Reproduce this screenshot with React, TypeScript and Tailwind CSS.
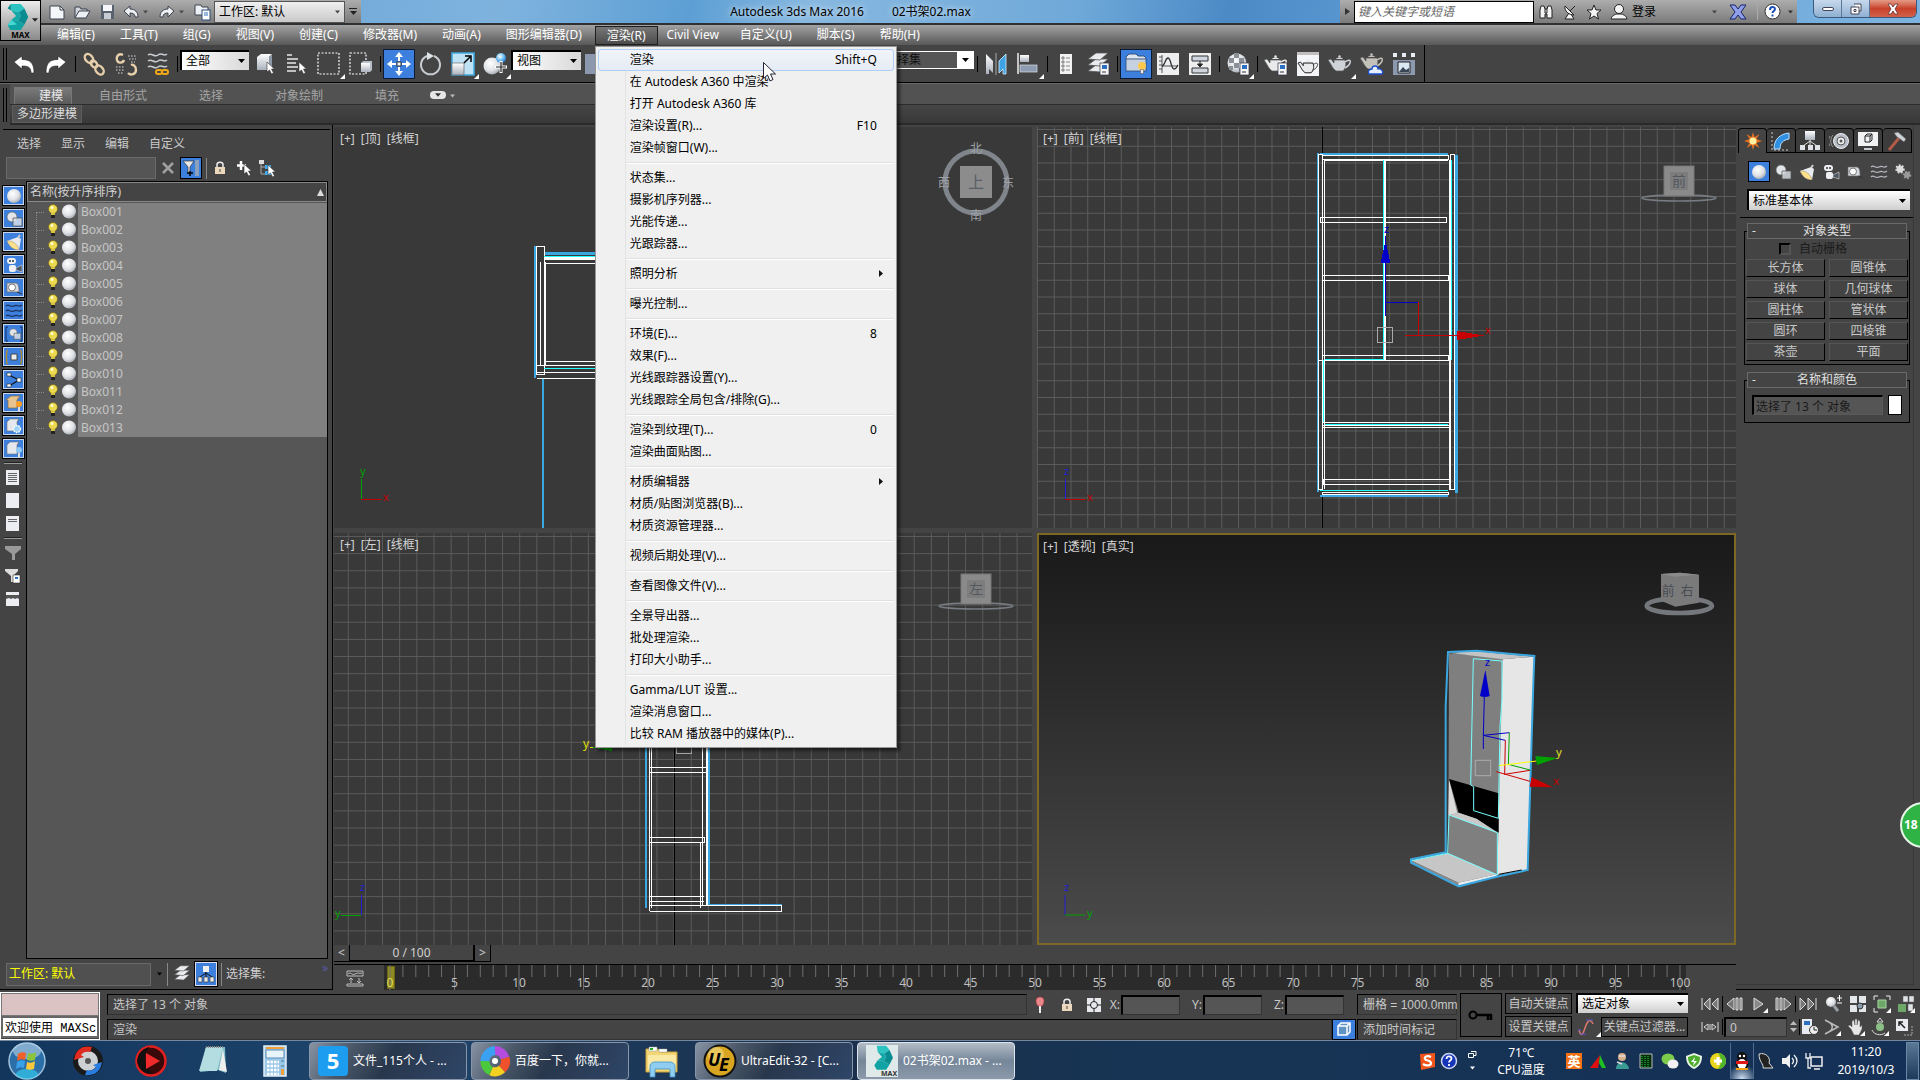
import React, { ReactNode } from "react";

/* ---------- shared primitives ---------- */

type Kids = { children?: ReactNode };

function Svg({ s = 24, h, children }: Kids & { s?: number; h?: number }) {
  return (
    <svg width={s} height={h ?? s} viewBox={`0 0 ${s} ${h ?? s}`} fill="none" className="block shrink-0" aria-hidden="true">
      {children}
    </svg>
  );
}

function Tool({ label, active, fly, children }: Kids & { label: string; active?: boolean; fly?: boolean }) {
  return (
    <button
      aria-label={label}
      className={
        active
          ? "relative flex h-[30px] w-8 shrink-0 items-center justify-center border border-[#0c1a33] bg-[#3c7fdd]"
          : "relative flex h-[30px] w-8 shrink-0 items-center justify-center"
      }
    >
      {children}
      {fly && <span className="absolute right-0 bottom-0"><Fly /></span>}
    </button>
  );
}

const Fly = () => (
  <Svg s={5}><path d="M5 0v5H0z" fill="#fff" /></Svg>
);

const Bar = () => (
  <span className="flex w-[6px] shrink-0 justify-center"><span className="h-4 w-px bg-black" /></span>
);

const Grip = ({ tall }: { tall?: boolean }) => (
  <span className={tall ? "ml-[3px] h-[34px] w-1 shrink-0 border-x border-black" : "ml-[3px] h-8 w-1 shrink-0 border-x border-black"} />
);

const Tri = ({ c = "#000", w = 7 }: { c?: string; w?: number }) => (
  <svg width={w} height={4} viewBox="0 0 7 4" className="block shrink-0" aria-hidden="true"><path d="M0 0h7L3.500 4z" fill={c} /></svg>
);

function Drop({ label, value, box, text = "text-black" }: { label: string; value: string; box: string; text?: string }) {
  return (
    <span className={"relative flex shrink-0 items-center " + box}>
      <select aria-label={label} defaultValue={value} className={"h-full w-full appearance-none bg-transparent pl-1 text-[12px] leading-4 outline-none " + text}>
        <option>{value}</option>
      </select>
      <span className="pointer-events-none absolute right-1"><Tri /></span>
    </span>
  );
}

/* ---------- icons ---------- */

const Defs = () => (
  <svg width="0" height="0" className="absolute" aria-hidden="true">
    <defs>
      <radialGradient id="ball" cx=".4" cy=".35" r=".7"><stop offset="0" stopColor="#fff" /><stop offset=".6" stopColor="#dfe1e5" /><stop offset="1" stopColor="#a2a7ae" /></radialGradient>
      <radialGradient id="blueball" cx=".4" cy=".35" r=".7"><stop offset="0" stopColor="#fff" /><stop offset=".6" stopColor="#5fb4ee" /><stop offset="1" stopColor="#1f6fc0" /></radialGradient>
      <linearGradient id="steel" x1="0" y1="0" x2="0" y2="1"><stop offset="0" stopColor="#fff" /><stop offset="1" stopColor="#aab1bd" /></linearGradient>
    </defs>
  </svg>
);

const UndoI = ({ flip }: { flip?: boolean }) => (
  <Svg s={22}><g transform={flip ? "translate(22 0) scale(-1 1)" : undefined}><path d="M1 9l8-6v3.500c8 0 12 3 12 13.500h-3c0-6-3-7-9-7v3z" fill="#fff" stroke="#222" strokeWidth=".6" /></g></Svg>
);
const SmallUndo = ({ flip }: { flip?: boolean }) => (
  <Svg s={16}><g transform={flip ? "translate(16 0) scale(-1 1)" : undefined}><path d="M1 7l6-5v3c5 0 8 3 8 8h-3c0-3-2-4-5-4v4z" fill="#eef0f2" stroke="#3a424e" /></g></Svg>
);
const ChainI = () => (
  <Svg s={24}><g stroke="#e6cfaa" strokeWidth="2.400"><ellipse cx="7" cy="6.500" rx="5" ry="3.600" transform="rotate(50 7 6.500)" /><ellipse cx="12" cy="12" rx="4" ry="2.600" transform="rotate(50 12 12)" /><ellipse cx="17.500" cy="18" rx="5" ry="3.600" transform="rotate(50 17.500 18)" /></g></Svg>
);
const UnlinkI = () => (
  <Svg s={24}><g stroke="#e6cfaa" strokeWidth="2.400"><path d="M10 8C9 11 4 12 3 8S5 1 9 3M14 21c3 3 8 1 8-3s-3-6-5-5" /></g><g stroke="#ddd" strokeDasharray="1.500 1.500"><path d="M14 4h8M15 7h7M17 10h4M2 15h8M2 18h8M4 21h6" /></g></Svg>
);
const BindI = () => (
  <Svg s={24}><g stroke="#c9cdd2" strokeWidth="1.500"><path d="M2 3c4-3 6 3 10 0s6 2 9-1M2 9c4-3 6 3 10 0s6 2 9-1M2 15c4-3 6 3 10 0s6 2 9-1" /></g><g stroke="#f0a818" strokeWidth="2"><rect x="10" y="18" width="6" height="4" rx="2" /><rect x="16" y="18" width="6" height="4" rx="2" /></g></Svg>
);
const Arrow = ({ x, y }: { x: number; y: number }) => (
  <path transform={`translate(${x} ${y})`} d="M0 0v10l2.500-2 2 4 2-1-2-4h3z" fill="#fff" stroke="#333" strokeWidth=".6" />
);
const CubeArrowI = () => (
  <Svg s={24}><path d="M4 5l4-3h11l-3 3zM4 5h12v13H4z" fill="url(#steel)" /><path d="M16 5l3-3v12l-3 4z" fill="#8e97a5" /><Arrow x={14} y={10} /></Svg>
);
const ListArrowI = () => (
  <Svg s={24}><g stroke="#e8e8e8" strokeWidth="1.400"><path d="M2 3h5M2 7h11M2 11h9M2 15h11M2 19h9" /></g><Arrow x={14} y={10} /></Svg>
);
const DashI = ({ cube }: { cube?: boolean }) => (
  <Svg s={24}><rect x="1" y="1" width={cube ? 16 : 21} height="21" stroke="#fff" strokeDasharray="2 1.500" strokeWidth="1.200" />{cube && <><path d="M12 11h9v9h-9z" fill="url(#steel)" /><path d="M12 11l2-2h9l-2 2zM21 11l2-2v9l-2 2z" fill="#b9bfca" /></>}</Svg>
);
const MoveI = () => (
  <Svg s={24}><path d="M12 0l4 5h-3v4h-2V5H8zM12 24l4-5h-3v-4h-2v4H8zM0 12l5-4v3h4v2H5v3zM24 12l-5-4v3h-4v2h4v3z" fill="#fff" /><rect x="10" y="10" width="4" height="4" stroke="#333" fill="#fff" /></Svg>
);
const RotateI = () => (
  <Svg s={24}><path d="M15 4a9.500 9.500 0 1 1-7 0" stroke="#c9cdd2" strokeWidth="2" /><path d="M8 0l7 4-7 4z" fill="#dfe3e8" /></Svg>
);
const ScaleI = () => (
  <Svg s={24}><path d="M1 1h22v22H1z" fill="#bfe3f5" stroke="#3fa9df" strokeWidth="1.500" /><path d="M1 11h12v12H1z" fill="url(#steel)" stroke="#555" strokeWidth=".6" /><path d="M13 11l6-6M14 4h6v6" stroke="#000" strokeWidth="1.500" /></Svg>
);
const PlaceI = () => (
  <Svg s={24}><circle cx="9" cy="14" r="8.500" fill="url(#ball)" /><circle cx="18" cy="6" r="5" fill="url(#blueball)" /><path d="M18 9v12M12 15h12" stroke="#fff" strokeWidth="3" /><path d="M18 10v10M13 15h10" stroke="#222" strokeWidth="1.200" /></Svg>
);
const MirrorI = () => (
  <Svg s={24}><path d="M2 2l7 7v12l-4-4v5H2z" fill="url(#steel)" /><path d="M22 2l-7 7v12l4-4v5h3z" fill="#3fa2e4" stroke="#d7effc" strokeWidth=".8" /><path d="M12 1v22" stroke="#aaa" /></Svg>
);
const AlignI = () => (
  <Svg s={24}><path d="M2 1v21" stroke="#eee" strokeWidth="1.500" /><rect x="4" y="3" width="9" height="7" fill="url(#steel)" /><rect x="4" y="13" width="17" height="7" fill="#8e9bb0" stroke="#d8dee8" strokeWidth=".7" /></Svg>
);
const SheetI = () => (
  <Svg s={24}><path d="M6 2h12v20H6z" fill="#f2f2f2" /><path d="M8 5h2v2H8zM8 9h2v2H8zM8 13h2v2H8zM8 17h2v2H8z" stroke="#555" strokeWidth=".7" /><path d="M12 6h4M12 10h4M12 14h4M12 18h4" stroke="#888" /></Svg>
);
const Badge = () => (
  <g><rect x="14" y="11" width="9" height="12" fill="#f4f6f8" stroke="#334" strokeWidth=".7" /><rect x="16" y="13" width="5" height="4" fill="#2b6fc0" /><path d="M16 20h4" stroke="#333" /></g>
);
const LayersI = ({ badge, s = 24 }: { badge?: boolean; s?: number }) => (
  <svg width={s} height={s} viewBox="0 0 24 24" fill="none" className="block" aria-hidden="true"><g fill="#e9ebee" stroke="#555" strokeWidth=".8"><path d="M2 19l8-6h12l-8 7z" /><path d="M2 13l8-6h12l-8 7z" /><path d="M2 7l8-6h12l-8 7z" /></g>{badge && <Badge />}</svg>
);
const RibbonI = () => (
  <Svg s={24}><path d="M2 5l3-3h7l2 2h6l2 2v13H2z" fill="#dfe5ee" stroke="#33507c" /><path d="M2 7h20" stroke="#33507c" /><path d="M3 8h18v10H3z" fill="#c6d1e2" /><circle cx="18" cy="14" r="4" fill="#ffc94d" /><path d="M16.500 17.500h3v4h-3z" fill="#e9e9e9" stroke="#555" strokeWidth=".5" /></Svg>
);
const CurveI = () => (
  <Svg s={24}><path d="M1 1h22v22H1z" fill="#eceef0" /><path d="M6 3v18M3 5h3M3 9h3M3 13h3M3 17h3M6 14h16" stroke="#555" /><path d="M6 14c3 0 3-8 6-8s3 11 6 11 3-3 4-4" stroke="#333" strokeWidth="1.300" /></Svg>
);
const SchematicI = () => (
  <Svg s={24}><path d="M1 1h22v22H1z" fill="#eceef0" /><path d="M4 4h16v5H4zM4 16h16v5H4z" fill="#cfd5de" stroke="#333" /><path d="M12 9v5M9.500 12l2.500 3 2.500-3z" fill="#222" stroke="#222" /></Svg>
);
const MaterialI = () => (
  <Svg s={24}><circle cx="11" cy="11" r="9.500" fill="url(#ball)" /><path d="M3 6h5v5H3zM8 1h5v5H8zM13 6h5v5h-5zM8 11h5v5H8zM3 14h4v4H3zM13 16h3v4h-3z" fill="#8a9098" /><Badge /></Svg>
);
const Pot = ({ c = "#e8eaec", x = 0, y = 0 }: { c?: string; x?: number; y?: number }) => (
  <g transform={`translate(${x} ${y})`}><path d="M6 8h11c2 5 0 9-2 11H8C5 17 4 14 2 11L0 8l3-1 3 4z" fill={c} stroke="#555" strokeWidth=".7" /><path d="M17 10c4-3 6-2 5 1s-3 4-5 5" stroke={c} strokeWidth="1.500" /><path d="M8 7c1-2 6-2 7 0z" fill={c} /><circle cx="11.500" cy="4.500" r="1.200" fill={c} /></g>
);
const PotFrameI = () => (
  <Svg s={24}><path d="M1 0h22v24H1z" fill="#f3f5f8" /><path d="M1 0h22v3H1z" fill="#c4bfbf" /><g transform="translate(2 4) scale(.88)"><Pot c="#e8eaec" /><path d="M17 10c4-3 6-2 5 1s-3 4-5 5M6 8h11c2 5 0 9-2 11H8C5 17 4 14 2 11L0 8l3-1 3 4z" stroke="#333" /></g></Svg>
);
const GalleryI = () => (
  <Svg s={24}><path d="M1 1h4v4H1zM10 1h4v4h-4zM19 1h4v4h-4z" fill="#e8edf3" /><path d="M1 8h22v15H1z" fill="#8b98ad" /><path d="M6 10h12v11H6z" fill="#dbe7f3" stroke="#222" /><path d="M7 20l4-5 3 3 3-2v4z" fill="#3a4655" /></Svg>
);
const MaxLogo = ({ s = 30 }: { s?: number }) => (
  <svg width={s} height={s} viewBox="0 0 30 30" className="block" aria-hidden="true">
    <path d="M8 1h11l4 5-6 4-8-2z" fill="#2cc4c0" /><path d="M17 10l6-4 4 9-4 8-7-4 3-5z" fill="#0a8d90" /><path d="M8 1l-3 5 4 2z" fill="#0a8d90" /><path d="M9 8l8 2 2 4-3 5-7-1 5-4z" fill="#14a9a8" /><path d="M9 18l7 1 7 4-4 6H8l-3-5z" fill="#0fa3a3" /><path d="M9 18l-4 6 10-1z" fill="#45d7d2" />
  </svg>
);

/* ---------- header ---------- */

function TitleBar() {
  return (
    <div className="flex h-[25px] shrink-0 border-b-2 border-[#2e3033] bg-[linear-gradient(100deg,#5b9bd0_0%,#7fb3de_26%,#5d9fd4_36%,#87b8e0_42%,#6fa9d9_56%,#4c8ac6_64%,#5f9fd6_75%,#7db3e0_100%)]">
      <div className="flex w-[361px] shrink-0 items-center bg-gradient-to-b from-[#adadad] to-[#7b7b7b] pl-[48px]">
        <button aria-label="新建" className="w-[25px]"><Svg s={18}><path d="M2 3h10l4 4v9H2z" fill="#f4f6f9" stroke="#3d434e" /><path d="M12 3v4h4" stroke="#3d434e" /></Svg></button>
        <button aria-label="打开" className="w-[25px]"><Svg s={18}><path d="M2 15V4h5l1 2h6v2" fill="#cfd3da" stroke="#3d434e" /><path d="M2 15l4-7h11l-4 7z" fill="#eef1f4" stroke="#3d434e" /></Svg></button>
        <button aria-label="保存" className="w-[25px]"><Svg s={18}><path d="M3 2h13v14H3z" fill="#59606e" /><path d="M5 2h9v6H5z" fill="#f4f6f9" /><path d="M6 10h7v6H6z" fill="#c7ccd4" /></Svg></button>
        <button aria-label="撤消" className="w-5"><SmallUndo /></button>
        <span className="w-4"><Tri c="#4a4a4a" w={5} /></span>
        <button aria-label="重做" className="w-5"><SmallUndo flip /></button>
        <span className="w-3"><Tri c="#4a4a4a" w={5} /></span>
        <button aria-label="项目文件夹" className="mr-[2px] ml-[3px] w-[18px]"><Svg s={18}><path d="M1 2h6l1 2h6v8H1z" fill="#eef1f4" stroke="#3d434e" /><rect x="8" y="7" width="8" height="10" fill="#fff" stroke="#2d4d7d" /><path d="M10 10h4M10 12h4" stroke="#2b6fc0" /></Svg></button>
        <span className="relative flex h-[22px] w-[131px] items-center border border-[#555] bg-gradient-to-b from-[#f0f0f0] to-[#c9c9c9]">
          <select aria-label="工作区" className="h-full w-full appearance-none bg-transparent pl-1 text-[12px] text-black"><option>工作区: 默认</option></select>
          <span className="pointer-events-none absolute right-1"><Tri c="#444" w={5} /></span>
        </span>
        <button aria-label="自定义快速访问" className="flex h-full w-4 flex-col items-center justify-center gap-[2px]"><span className="h-px w-2 bg-[#222]" /><Tri c="#222" /></button>
      </div>
      <h1 className="flex flex-1 items-center justify-center gap-7 text-[12px] text-black [text-shadow:0_0_6px_#fff]">
        <span>Autodesk 3ds Max 2016</span><span>02书架02.max</span>
      </h1>
      <div className="flex w-[457px] shrink-0 items-center bg-gradient-to-b from-[#adadad] to-[#7b7b7b] text-[#2c3440]">
        <span className="flex w-[14px] justify-center"><Svg s={7}><path d="M1 0l5 3.500-5 3.500z" fill="#333" /></Svg></span>
        <input aria-label="搜索" placeholder="键入关键字或短语" className="h-[22px] w-[180px] border border-black bg-white pl-[3px] text-[12px] italic placeholder:text-[#666]" />
        <button aria-label="查找" className="ml-1 w-6"><Svg s={16}><path d="M2 6l1-4h3l1 3h2l1-3h3l1 4v8H9v-4H7v4H2z" fill="#f4f4f4" stroke="#222" /><path d="M7 5v4h2V5" stroke="#222" /></Svg></button>
        <button aria-label="通信中心" className="w-6"><Svg s={16}><path d="M3 2c-1 5 4 9 9 9zM7 9l-4 6h9l-3-5M8 7l5-5" fill="#f4f4f4" stroke="#222" /></Svg></button>
        <button aria-label="收藏夹" className="w-6"><Svg s={16}><path d="M8 1l2 5h5l-4 3.500 1.500 5.500L8 12l-4.500 3L5 9.500 1 6h5z" fill="#f4f4f4" stroke="#222" /></Svg></button>
        <button className="flex items-center gap-1 text-[12px] text-black"><Svg s={18}><circle cx="9" cy="6" r="4.500" fill="#f4f4f4" stroke="#222" /><path d="M1 16c1-4 4-4 5-5h6c1 1 4 1 5 5z" fill="#f4f4f4" stroke="#222" /></Svg>登录</button>
        <span className="ml-auto"><Tri c="#444" w={5} /></span>
        <button aria-label="Exchange" className="mr-1 ml-3 w-[18px]"><Svg s={18}><path d="M1 2h5l3 4 3-4h5l-5 7 5 7h-5l-3-4-3 4H1l5-7z" fill="#8f9fe8" stroke="#18256e" /></Svg></button>
        <span className="mx-[6px] h-4 w-px bg-[#aaa]" />
        <button aria-label="帮助" className="mr-2 w-4"><Svg s={17}><circle cx="8.500" cy="8.500" r="7.500" fill="#fff" stroke="#333" /><path d="M6 7c0-4 5-3.500 5-1 0 2-2.500 2-2.500 4M8.500 11.500v2" stroke="#1d4fb8" strokeWidth="2" /></Svg></button>
        <span className="mr-1"><Tri c="#333" w={5} /></span>
      </div>
      <div className="ml-4 flex h-[18px] w-[104px] shrink-0 overflow-hidden rounded-b-md border border-t-0 border-[#3d5a7c]">
        <button aria-label="最小化" className="flex w-7 items-center justify-center border-r border-[#5b7797] bg-gradient-to-b from-[#c7d9ec] to-[#8fb0d2]"><span className="h-[4px] w-3 rounded-sm border border-[#445] bg-white" /></button>
        <button aria-label="还原" className="flex w-7 items-center justify-center border-r border-[#5b7797] bg-gradient-to-b from-[#c7d9ec] to-[#8fb0d2]"><Svg s={12}><path d="M4 1h7v7H9M1 4h8v7H1zM4 6.500h2v2H4z" stroke="#445" fill="#fff" /></Svg></button>
        <button aria-label="关闭" className="flex flex-1 items-center justify-center bg-gradient-to-b from-[#e39a86] via-[#c9412a] to-[#d2604a]"><Svg s={12}><path d="M1 1h3l2 3 2-3h3L8 6l3 5H8L6 8l-2 3H1l3-5z" fill="#fff" stroke="#633" strokeWidth=".8" /></Svg></button>
      </div>
      <span className="w-[3px] shrink-0" />
    </div>
  );
}

type Entry = { t: string; k?: string; sub?: boolean };
const RENDER_MENU: Entry[][] = [
  [{ t: "渲染", k: "Shift+Q" }, { t: "在 Autodesk A360 中渲染" }, { t: "打开 Autodesk A360 库" }, { t: "渲染设置(R)...", k: "F10" }, { t: "渲染帧窗口(W)..." }],
  [{ t: "状态集..." }, { t: "摄影机序列器..." }, { t: "光能传递..." }, { t: "光跟踪器..." }],
  [{ t: "照明分析", sub: true }],
  [{ t: "曝光控制..." }],
  [{ t: "环境(E)...", k: "8" }, { t: "效果(F)..." }, { t: "光线跟踪器设置(Y)..." }, { t: "光线跟踪全局包含/排除(G)..." }],
  [{ t: "渲染到纹理(T)...", k: "0" }, { t: "渲染曲面贴图..." }],
  [{ t: "材质编辑器", sub: true }, { t: "材质/贴图浏览器(B)..." }, { t: "材质资源管理器..." }],
  [{ t: "视频后期处理(V)..." }],
  [{ t: "查看图像文件(V)..." }],
  [{ t: "全景导出器..." }, { t: "批处理渲染..." }, { t: "打印大小助手..." }],
  [{ t: "Gamma/LUT 设置..." }, { t: "渲染消息窗口..." }, { t: "比较 RAM 播放器中的媒体(P)..." }],
];

function RenderMenu() {
  return (
    <div role="menu" className="absolute top-[20px] left-0 z-40 w-[302px] border border-[#979797] bg-[#f0f0f0] p-[2px] text-black shadow-[3px_3px_3px_rgba(0,0,0,0.5)]">
      <span className="absolute inset-y-[2px] left-[29px] w-px bg-[#e2e3e3]" />
      {RENDER_MENU.map((group, g) => (
        <div key={g} className={g ? "relative" : ""}>
          {g > 0 && <div className="my-[3px] ml-7 h-[2px] border-b border-white bg-[#e0e0e0]" />}
          {group.map((e, i) => (
            <button
              key={e.t}
              role="menuitem"
              className={
                g === 0 && i === 0
                  ? "relative flex h-[22px] w-full items-center rounded-[3px] border border-[#aecff7] bg-gradient-to-b from-[#f1f4f9] to-[#e6ecf5] pr-4 pl-[31px] text-left text-[12px]"
                  : "relative flex h-[22px] w-full items-center border border-transparent pr-4 pl-[31px] text-left text-[12px]"
              }
            >
              <span className="flex-1 whitespace-nowrap">{e.t}</span>
              {e.k && <span>{e.k}</span>}
              {e.sub && <span className="-mr-2"><Svg s={7}><path d="M1 0l4 3.500-4 3.500z" fill="#111" /></Svg></span>}
            </button>
          ))}
        </div>
      ))}
    </div>
  );
}

const MENUS = ["编辑(E)", "工具(T)", "组(G)", "视图(V)", "创建(C)", "修改器(M)", "动画(A)", "图形编辑器(D)", "渲染(R)", "Civil View", "自定义(U)", "脚本(S)", "帮助(H)"];

function MenuBar() {
  return (
    <nav className="flex h-[20px] shrink-0 items-center gap-px bg-gradient-to-b from-[#a3a3a3] via-[#7d7d7d] to-[#585858] pl-[45px] text-[12px] text-white">
      {MENUS.map((m) =>
        m === "渲染(R)" ? (
          <div key={m} className="relative">
            <button className="h-[19px] border border-[#1e1e1e] bg-gradient-to-b from-[#777] to-[#4c4c4c] px-[11px]">{m}</button>
            <RenderMenu />
          </div>
        ) : (
          <button key={m} className={m === "Civil View" ? "px-2" : "px-3"}>{m}</button>
        ),
      )}
    </nav>
  );
}

function MainToolbar() {
  return (
    <div className="flex h-[38px] shrink-0 border-b border-black bg-[#444]">
      <div className="flex items-center border-r border-black pr-1">
        <Grip /><span className="w-px" />
        <Tool label="撤消"><UndoI /></Tool>
        <Tool label="重做"><UndoI flip /></Tool>
        <Bar />
        <Tool label="选择并链接"><ChainI /></Tool>
        <Tool label="取消链接选择"><UnlinkI /></Tool>
        <Tool label="绑定到空间扭曲"><BindI /></Tool>
        <Bar />
        <Drop label="选择过滤器" value="全部" box="-mt-2 h-5 w-[69px] border-t-2 border-l-2 border-black bg-gradient-to-r from-white to-[#d8d8d8]" />
        <Tool label="选择对象"><CubeArrowI /></Tool>
        <Tool label="按名称选择"><ListArrowI /></Tool>
        <Tool label="矩形选择区域" fly><DashI /></Tool>
        <Tool label="窗口/交叉"><DashI cube /></Tool>
        <Bar />
        <Tool label="选择并移动" active><MoveI /></Tool>
        <Tool label="选择并旋转"><RotateI /></Tool>
        <Tool label="选择并均匀缩放" fly><ScaleI /></Tool>
        <Tool label="选择并放置" fly><PlaceI /></Tool>
        <Drop label="参考坐标系" value="视图" box="-mt-2 h-5 w-[70px] border-t-2 border-l-2 border-black bg-gradient-to-r from-white to-[#d8d8d8]" />
        <Tool label="使用轴点中心"><Svg s={24}><path d="M0 2h14v20H0z" fill="#8b98ad" /></Svg></Tool>
        <span className="w-[235px]" />
        <span className="relative -mt-2 flex h-[18px] w-[126px] items-center border border-white bg-[#555]">
          <select aria-label="创建选择集" className="h-full w-full appearance-none bg-transparent pl-3 text-[12px] leading-4 text-[#111]"><option>创建选择集</option></select>
          <span className="pointer-events-none absolute top-0 right-0 flex h-full w-4 items-center justify-center bg-white"><Tri /></span>
        </span>
        <Bar />
        <Tool label="镜像"><MirrorI /></Tool>
        <Tool label="对齐" fly><AlignI /></Tool>
        <Bar />
        <Tool label="场景资源管理器"><SheetI /></Tool>
        <Tool label="层资源管理器"><LayersI badge /></Tool>
        <Bar />
        <Tool label="切换功能区" active><RibbonI /></Tool>
        <Tool label="曲线编辑器"><CurveI /></Tool>
        <Tool label="图解视图"><SchematicI /></Tool>
        <Bar />
        <Tool label="材质编辑器" fly><MaterialI /></Tool>
        <Bar />
        <Tool label="渲染设置"><Svg s={24}><Pot /><Badge /></Svg></Tool>
        <Tool label="渲染帧窗口"><PotFrameI /></Tool>
        <Tool label="渲染产品" fly><Svg s={24}><Pot c="#cfd2d6" /></Svg></Tool>
        <Tool label="在云中渲染"><Svg s={24}><Pot c="#c4c1bb" y={-2} /><path d="M9 22c-2-4 2-5 3-5 0-4 6-4 6 0 3-1 6 3 4 5z" fill="#e6f0ff" stroke="#1c4fd0" strokeWidth="1.300" /></Svg></Tool>
        <Tool label="A360 库"><GalleryI /></Tool>
      </div>
    </div>
  );
}

function Ribbon() {
  return (
    <div className="flex h-[42px] shrink-0 border-t border-[#6a6a6a] bg-[#4f4f4f]">
      <div className="flex w-[10px] shrink-0 items-center bg-[#444]"><Grip tall /></div>
      <div className="flex flex-1 flex-col">
        <div className="flex h-[20px] items-end bg-[#525252] pl-1 text-[12px] text-[#a5a5a5]">
          <button className="h-[17px] w-[58px] border border-b-0 border-[#777] bg-gradient-to-b from-[#7a7a7a] to-[#5a5a5a] pl-4 leading-4 text-[#e6e6e6]">建模</button>
          <button className="ml-[27px] leading-[17px]">自由形式</button>
          <button className="ml-[52px] leading-[17px]">选择</button>
          <button className="ml-[52px] leading-[17px]">对象绘制</button>
          <button className="ml-[52px] leading-[17px]">填充</button>
          <button aria-label="最小化功能区" className="mb-[5px] ml-[31px] flex h-2 w-4 items-center justify-center rounded-sm bg-[#e6e6e6]"><Tri c="#333" w={6} /></button>
          <span className="mb-[6px] ml-1"><Tri c="#bbb" w={5} /></span>
        </div>
        <div className="flex h-[19px] items-center border-t border-[#2c2c2c] bg-gradient-to-b from-[#464646] to-[#383838] pl-[2px]">
          <button className="h-[18px] w-[70px] border border-[#5c5c5c] bg-[#505050] text-[12px] leading-4 whitespace-nowrap text-[#dcdcdc]">多边形建模</button>
        </div>
        <div className="h-[2px] border-y border-[#2a2a2a] bg-[#444]" />
      </div>
    </div>
  );
}

/* ---------- scene explorer ---------- */

const Sphere = () => <circle cx="9" cy="8" r="7" fill="url(#ball)" />;
const Shapes = () => (<><circle cx="7" cy="6" r="5" fill="#e2e5ea" stroke="#666" strokeWidth=".7" /><path d="M8 7h9v8H8z" fill="#dfe3e9" fillOpacity=".8" stroke="#555" strokeWidth=".8" /></>);
const Lamp = () => (<><path d="M2 7L13 3l3 2-2 11z" fill="#e9ebee" /><path d="M2 7c2 5 6 9 12 9-1-5-6-10-12-9z" fill="#ffe08a" stroke="#888" strokeWidth=".5" /><path d="M13 4l2-3" stroke="#ccc" strokeWidth="2" /></>);
const Cam = () => (<><rect x="2" y="1" width="9" height="6" rx="3" fill="#eef0f3" /><circle cx="5" cy="4" r="1" fill="#333" /><circle cx="8" cy="4" r="1" fill="#333" /><rect x="4" y="8" width="7" height="7" rx="2" fill="#eef0f3" /><path d="M11 11l6-3v7l-6-2z" fill="#4b5560" stroke="#ddd" strokeWidth=".6" /></>);
const Tape = () => (<><path d="M2 3h9c3 1 3 5 3 9H2z" fill="#d7dbe1" stroke="#666" strokeWidth=".7" /><circle cx="7" cy="7.500" r="3.500" fill="#fff" stroke="#777" /><path d="M12 12l5 2" stroke="#333" /></>);
const CubeS = () => (<path d="M2 4l3-3h9l-2 3v9H2zM12 4l2-3" fill="#e4e7ec" stroke="#777" strokeWidth=".6" />);

const FILTERS: ReactNode[] = [
  <Sphere />, <Shapes />, <Lamp />, <Cam />, <Tape />,
  <path d="M1 3c3-3 4 2 8 0s4 2 8-1M1 8c3-3 4 2 8 0s4 2 8-1M1 13c3-3 4 2 8 0s4 2 8-1" stroke="#1b2f55" strokeWidth="1.200" />,
  <><path d="M3 1H1v14h2M15 1h2v14h-2" stroke="#0d2d66" /><g transform="translate(3 2) scale(.75)"><Shapes /></g></>,
  <><path d="M3 1c-3 1 0 5-2 7 2 2-1 6 2 7M15 1c3 1 0 5 2 7-2 2 1 6-2 7" stroke="#b58b2e" strokeWidth="1.300" /><path d="M6 5h6v6H6z" fill="#eee" stroke="#444" /></>,
  <><path d="M4 3l10 5-10 6" stroke="#111" strokeWidth="1.200" /><path d="M2 1h4v3H2zM12 6h4v4h-4zM2 12h4v3H2z" fill="#fff" stroke="#222" strokeWidth=".6" /></>,
  <><path d="M1 5l5-4h9l-3 4v8H3V5z" fill="#e7c48f" stroke="#8a6a3b" strokeWidth=".7" /><circle cx="14" cy="9" r="3" fill="#ff9d1e" /><path d="M13 12h2v4h-2z" fill="#ddd" /></>,
  <><CubeS /><circle cx="12" cy="11" r="3.500" fill="#9fd4f5" stroke="#fff" strokeDasharray="1.500 1" strokeWidth="1.500" /></>,
  <><CubeS /><circle cx="14" cy="9" r="3" fill="#8fc8f5" /><path d="M13 12h2v4h-2z" fill="#ddd" /></>,
];
const FILTER_NAMES = ["几何体", "图形", "灯光", "摄影机", "辅助对象", "空间扭曲", "组", "对象外部参照", "骨骼", "容器", "冻结对象", "隐藏对象"];

function SceneExplorer() {
  return (
    <aside className="flex w-[333px] shrink-0 flex-col border-r border-b border-black bg-[#444] pt-1 text-[12px]">
      <div className="mr-[2px] ml-[3px] flex h-[29px] items-center gap-5 border-t border-black pl-[14px] text-[#c9c9c9]">
        <button>选择</button><button>显示</button><button>编辑</button><button>自定义</button>
      </div>
      <div className="flex h-[20px] items-center pl-[6px]">
        <input aria-label="查找" className="h-[22px] w-[150px] border border-[#6a6a6a] bg-[#555]" />
        <button aria-label="清除" className="flex w-[24px] justify-center"><Svg s={12}><path d="M1 1l10 10M11 1L1 11" stroke="#a0a0a0" strokeWidth="2.500" /></Svg></button>
        <button aria-label="过滤器" className="flex h-[22px] w-[22px] items-center justify-center border border-black bg-[#3c7fdd]"><Svg s={18}><path d="M1 2h11L8 8v6H6V8z" fill="#e8e8e8" stroke="#333" strokeWidth=".7" /><path d="M13 1h4v16h-4z" fill="#8ba0bb" /><path d="M5 14h6M8 12v5" stroke="#000" strokeWidth="1.500" /></Svg></button>
        <span className="mx-1 h-[21px] w-px bg-[#888]" />
        <button aria-label="锁定" className="ml-[2px]"><Svg s={14}><path d="M4 6V3.500c0-3 6-3 6 0V6" stroke="#eee" strokeWidth="1.500" /><path d="M2 6h10v7H2z" fill="#ecd9bd" /><path d="M7 8v3" stroke="#444" /></Svg></button>
        <button aria-label="添加到选择" className="ml-2"><Svg s={18}><path d="M6 2v9M2 6.500h9" stroke="#fff" strokeWidth="2.500" /><Arrow x={9} y={5} /></Svg></button>
        <button aria-label="选择子对象" className="ml-1"><Svg s={18}><path d="M4 3v12h5M4 8h5" stroke="#aaa" /><path d="M2 1h5v4H2z" fill="#ddd" /><path d="M8 6h6v4H8zM8 12h6v4H8z" fill="#3fa9ef" /><Arrow x={11} y={6} /></Svg></button>
      </div>
      <div className="flex flex-1 pt-[3px]">
        <div className="flex w-[26px] flex-col items-center gap-1 pt-[5px]">
          {FILTERS.map((f, i) => (
            <button key={i} aria-label={FILTER_NAMES[i]} className="ml-px flex h-[19px] w-[21px] items-center justify-center border border-[#c9d6ea] bg-[#3c7fdd] outline outline-1 outline-black">
              <Svg s={18} h={16}>{f}</Svg>
            </button>
          ))}
          <span className="h-[2px] w-[18px] border-b border-[#999] bg-[#222]" />
          {[5, 0, 2].map((n) => (
            <button key={n} aria-label={"显示 " + n} className="flex h-[19px] items-center"><Svg s={14} h={16}><path d="M0 0h13v15H0z" fill="#eceef2" />{[3, 5, 7, 9, 11].slice(0, n).map((y) => <path key={y} d={`M2 ${y}.500h9`} stroke="#666" />)}</Svg></button>
          ))}
          <span className="h-[2px] w-[18px] border-b border-[#999] bg-[#222]" />
          <button aria-label="过滤" className="flex h-[19px] items-center"><Svg s={16}><path d="M0 1h16v3l-6 5v6H7V9L0 4z" fill="#999" /></Svg></button>
          <button aria-label="过滤配置" className="flex h-[19px] items-center"><Svg s={16}><path d="M0 1h13v2L8 8v6H6V8L0 3z" fill="#ddd" /><path d="M8 7h7v8H8z" fill="#fff" stroke="#333" strokeWidth=".6" /><path d="M10 9h3v2h-3z" fill="#2b6fc0" /></Svg></button>
          <button aria-label="容器" className="flex h-[19px] items-center"><Svg s={14} h={16}><path d="M0 1h13v14H0z" fill="#eceef2" /><path d="M0 4h13v4l-2-1-2 1-2-1-2 1-2-1-3 1z" fill="#555" /></Svg></button>
        </div>
        <div className="mr-1 flex flex-1 flex-col border border-black bg-[#565656]">
          <div className="mb-px flex h-[20px] items-center justify-between border border-[#888] bg-[#444] px-[2px] text-[#d0d0d0]">
            <span>名称(按升序排序)</span><Svg s={7}><path d="M0 7h7L3.500 0z" fill="#ddd" /></Svg>
          </div>
          <ul className="relative">
            <li aria-hidden="true" className="absolute top-[9px] bottom-[9px] left-[9px] border-l border-dotted border-[#888]" />
            {Array.from({ length: 13 }, (_, i) => (
              <li key={i} className="flex h-[18px] items-center">
                <span className="ml-[10px] w-[7px] border-t border-dotted border-[#888]" />
                <span className="ml-[3px]"><Svg s={12} h={18}><circle cx="6" cy="6" r="4.500" fill="#ecd94f" stroke="#6b5e10" strokeWidth=".6" /><circle cx="5" cy="4.500" r="1.500" fill="#fffbd0" /><path d="M4 10h4v2H4z" fill="#d5c23f" /><path d="M4 12h4v3H4z" fill="#222" /></Svg></span>
                <span className="ml-[2px]"><Svg s={16}><circle cx="8" cy="7.500" r="7" fill="url(#ball)" /></Svg></span>
                <span className="ml-px flex h-full flex-1 items-center bg-[#808080] pl-[3px] text-[#c6c6c6]">{`Box${String(i + 1).padStart(3, "0")}`}</span>
              </li>
            ))}
          </ul>
        </div>
      </div>
      <div className="flex h-[30px] items-center pl-[6px]">
        <span className="flex h-[23px] w-[145px] items-center border border-[#6a6a6a] bg-[#505050] pl-[2px] text-[#ff0]">工作区: 默认</span>
        <button aria-label="工作区列表" className="flex w-4 justify-center"><Tri w={5} /></button>
        <span className="mr-[5px] h-[23px] w-px bg-[#888]" />
        <button aria-label="层"><LayersI s={18} /></button>
        <button aria-label="层次" className="ml-[4px] flex h-6 w-[22px] items-center justify-center border border-[#dde] bg-[#3c7fdd] outline outline-1 outline-black"><Svg s={18}><path d="M6 1h6v6H6z" fill="#eee" /><path d="M9 7v5M3 12l6-4 6 4" stroke="#111" /><path d="M1 12h4v5H1zM7 12h4v5H7zM13 12h4v5h-4z" fill="#e8e8e8" stroke="#333" strokeWidth=".6" /></Svg></button>
        <span className="mx-1 h-[23px] w-px bg-[#888]" />
        <span className="text-[#d0d0d0]">选择集:</span>
        <span className="mr-1 mb-3 ml-auto text-[#5a5aa8]">»</span>
      </div>
    </aside>
  );
}

/* ---------- viewports ---------- */

const BLUE = "#3aa7e0";

function Viewport({ name, ox, oy, active, children }: Kids & { name: string[]; ox: number; oy: number; active?: boolean }) {
  return (
    <section aria-label={name[1]} className={active ? "relative overflow-hidden border-2 border-[#7d6825] bg-gradient-to-b from-[#191919] to-[#4b4b4b]" : "relative overflow-hidden bg-[#393939]"}>
      <svg className="absolute inset-0 h-full w-full" fill="none" aria-hidden="true">
        <g transform={`translate(${-ox} ${-oy})`} shapeRendering={active ? undefined : "crispEdges"}>{children}</g>
      </svg>
      <div className={active ? "absolute top-1 left-1 flex gap-[6px] text-[12px] leading-4 text-[#d4d4d4]" : "absolute top-1 left-[6px] flex gap-[6px] text-[12px] leading-4 text-[#d4d4d4]"}>
        {name.map((n) => <span key={n}>[{n}]</span>)}
      </div>
    </section>
  );
}

function Grid({ id, x, y, p, ax }: { id: string; x: number; y: number; p: number; ax?: number }) {
  return (
    <>
      <pattern id={id} x={x} y={y} width={p} height={p} patternUnits="userSpaceOnUse"><path d={`M.500 0V${p}M0 .500H${p}`} stroke="#5b5b5b" /></pattern>
      <rect x="300" y="100" width="1500" height="900" fill={`url(#${id})`} />
      {ax && <path d={`M${ax} 100V1000`} stroke="#000" />}
    </>
  );
}

function Tripod({ x, y, up, side, left }: { x: number; y: number; up: string; side: string; left?: boolean }) {
  const c: Record<string, string> = { x: "#c00000", y: "#00a000", z: "#2020d0" };
  return (
    <g className="text-[11px]">
      <path d={`M${x} ${y}v-20`} stroke={c[up]} />
      <path d={left ? `M${x} ${y}h-20` : `M${x} ${y}h20`} stroke={c[side]} />
      <text x={x - 1} y={y - 24} fill={c[up]}>{up}</text>
      <text x={left ? x - 26 : x + 22} y={y + 2} fill={c[side]}>{side}</text>
    </g>
  );
}

function FlatCube({ x, y, t }: { x: number; y: number; t: string }) {
  return (
    <g shapeRendering="auto">
      <ellipse cx={x} cy={y + 17} rx="37" ry="3" stroke="#777c82" strokeWidth="1.500" />
      <rect x={x - 15} y={y - 15} width="30" height="30" fill="#8a8a8a" stroke="#777" />
      <rect x={x - 9} y={y - 9} width="18" height="18" fill="#7d7d7d" />
      <text x={x} y={y + 5} textAnchor="middle" className="fill-[#53575f] text-[14px]">{t}</text>
    </g>
  );
}

function FrontDrawing() {
  return (
    <>
      <Grid id="gf" x={1305} y={129} p={16.75} ax={1322.5} />
      <g stroke={BLUE} strokeWidth="2"><path d="M1318 153V492M1320 154H1448M1320 496H1448" /><path d="M1456 155V493" strokeWidth="3" /></g>
      <g stroke="#fff">
        <path d="M1318.500 154.500h4v335h-4zM1450.500 154.500h4v335h-4zM1322.500 155.500h126v4h-126M1324.500 159V489M1320.500 217.500h126v5h-126zM1322.500 275.500h126v5h-126zM1318.500 360.500h130v-5h-126M1323 422.500h127M1323 427.500h127M1323 425.500h127M1323 479.500h126v5h-126zM1322 492.500h126v2h-126z" />
        <path d="M1324 160H1448M1450 160V490M1385 160V360" strokeWidth="2" />
      </g>
      <g stroke="#2ff"><path d="M1383.500 160V360M1451.500 160V360M1323.500 360V422M1325 359.500H1383M1325 424.500H1448M1320 490.500H1448" /></g>
      <g stroke="#0000c8"><path d="M1385.500 236V316M1385 302.500H1418" /></g>
      <path d="M1385.500 241l-5 22h10z" fill="#0000c8" />
      <g stroke="#c80000"><path d="M1418.500 302V335.500M1405 335.500H1458" /></g>
      <path d="M1457 331v9l27-4.500z" fill="#c80000" />
      <text x="1384" y="233" className="fill-[#0000c8] text-[11px]">z</text>
      <text x="1485" y="334" className="fill-[#c80000] text-[11px]">x</text>
      <rect x="1377.500" y="327.500" width="15" height="15" stroke="#aaa" />
      <FlatCube x={1679} y={181} t="前" />
      <Tripod x={1065} y={499} up="z" side="x" />
    </>
  );
}

function TopDrawing() {
  return (
    <>
      <g stroke={BLUE}><path d="M535 246V378M543 378V528" strokeWidth="2" /><path d="M544 253.500H620" strokeWidth="3" /></g>
      <g stroke="#fff"><path d="M536.500 246.500h8v128h-8zM544 263.500H620M540.500 262V366M545.500 262V366M544 361.500H620M537 365.500H620M537 372.500H620M537 378.500H620" /><path d="M544 258H620" strokeWidth="4" /></g>
      <path d="M544 256.500H620M544 368.500H620" stroke="#2ff" />
      <g shapeRendering="auto"><circle cx="976" cy="182" r="31" stroke="#80858c" strokeWidth="5" /><rect x="960" y="166" width="32" height="32" fill="#8c8c8c" /><text x="976" y="188" textAnchor="middle" className="fill-[#5a5e66] text-[16px]">上</text>
        <g className="fill-[#9ea1a6] text-[12px]"><text x="970" y="153">北</text><text x="970" y="220">南</text><text x="938" y="187">西</text><text x="1002" y="187">东</text></g></g>
      <Tripod x={361} y={499} up="y" side="x" />
    </>
  );
}

function LeftDrawing() {
  return (
    <>
      <Grid id="gl" x={605} y={536} p={17.15} ax={674.5} />
      <g stroke={BLUE} strokeWidth="2"><path d="M646 740V908M709 740V905M707 905H782" /></g>
      <g stroke="#fff"><path d="M649.500 740V911M651.500 740V908M702.500 740V905M650 767.500H708M650 772.500H708M650 837.500H704V842H650M700.500 842V908M650 896.500H704M650 901.500H704M650 905.500H781V911.500H650" /><path d="M707 740V905" strokeWidth="2" /></g>
      <rect x="676.500" y="737.500" width="15" height="16" stroke="#aaa" />
      <path d="M590 747.500H665" stroke="#d8d800" /><path d="M590 747l22 0v4z" fill="#00a000" />
      <text x="583" y="748" className="fill-[#e0e000] text-[12px]">y</text>
      <FlatCube x={976} y={589} t="左" />
      <Tripod x={361} y={915} up="z" side="y" left />
    </>
  );
}

function PerspectiveDrawing() {
  return (
    <>
      <g transform="translate(1380 540) scale(.33333)">
        <path d="M207 340L370 352V1000L350 1005 205 940z" fill="#7f7f7f" />
        <path d="M205 338L290 334 462 350 368 358z" fill="#c4c4c4" />
        <path d="M368 358L462 350 442 990 352 1005z" fill="#e6e6e6" />
        <path d="M207 717L232 820 205 826z" fill="#dcdcdc" />
        <path d="M207 717L356 760V878L290 838 236 818z" fill="#000" />
        <path d="M207 825L236 818 290 836 352 878z" fill="#c8c8c8" />
        <path d="M95 962L205 940 350 1003 235 1028z" fill="#c6c6c6" />
        <path d="M95 962L235 1028V1038L95 970z" fill="#8a8a8a" /><path d="M235 1028l115-25v6l-115 29z" fill="#eee" />
        <path d="M204 336L290 332 463 348 460 430 443 990 350 1010 236 1039 93 968V958L197 937V500z" stroke={BLUE} strokeWidth="6" />
        <path d="M280 356L366 363V480L360 560 355 835 281 812V740L272 735 276 545 280 356M207 825L352 878V1005L203 940M207 825L203 940L95 962" stroke="#7ff" strokeWidth="3" />
        <path d="M356 1003L425 990" stroke="#000" strokeWidth="3" />
        <g strokeWidth="3"><path d="M310 627V590L313 470M310 586L388 578M310 586L376 601" stroke="#0000c8" /><path d="M376 601L374 703 450 691M349 695L450 724" stroke="#c80000" /><path d="M388 578L385 673 450 690" stroke="#00a000" /><path d="M357 677L470 663" stroke="#ff0" /></g>
        <path d="M316 390l-16 78c8 4 20 4 29 0z" fill="#0000c8" /><path d="M466 648l67 6-62 21z" fill="#00a000" /><path d="M455 712l64 30-70-2z" fill="#c80000" />
        <rect x="286" y="661" width="46" height="46" stroke="#aaa" strokeWidth="3" />
        <g className="text-[34px]"><text x="314" y="378" fill="#0000c8">z</text><text x="528" y="648" fill="#e0e020">y</text><text x="520" y="736" fill="#c80000">x</text></g>
        <ellipse cx="898" cy="197" rx="98" ry="22" stroke="#74777c" strokeWidth="14" />
        <path d="M843 102L900 98 957 104V188L886 200 843 182z" fill="#7a7a7a" /><path d="M843 102L900 98 957 104 886 110z" fill="#8a8a8a" />
        <g className="fill-[#484c54] text-[38px]"><text x="845" y="164">前</text><text x="902" y="166">右</text></g>
      </g>
      <Tripod x={1065} y={915} up="z" side="y" />
    </>
  );
}

function Timeline() {
  const pos = (n: number) => `${((6 + 12.9 * n) / 1302) * 100}%`;
  return (
    <>
      <div className="flex h-[19px] text-[12px] text-[#d0d0d0]">
        <button aria-label="上一帧" className="flex h-[17px] w-4 items-center justify-center border-r border-b border-black">&lt;</button>
        <button className="h-[17px] w-[125px] border-r-2 border-b-2 border-black text-center leading-[14px]">0 / 100</button>
        <button aria-label="下一帧" className="flex h-[17px] w-4 items-center justify-center border-r border-b border-black">&gt;</button>
      </div>
      <div className="flex h-[26px] border-t border-black">
        <button aria-label="打开迷你曲线编辑器" className="flex w-[50px] shrink-0 items-center justify-center pr-2"><Svg s={18}><path d="M1 2h16v5H1zM1 15h16v2H1zM2 5c3-3 4 2 7 0s4 0 7-1M5 14V9M3 11l2-2 2 2M13 9v5M11 12l2 2 2-2" stroke="#bbb" /></Svg></button>
        <div className="relative flex-1 bg-[#2b2b2b]">
          <span className="absolute inset-y-px left-[3px] w-2 border border-[#6b6614] bg-[#8f8a22]" />
          <svg className="absolute inset-0 h-full w-full overflow-visible" aria-hidden="true">
            {Array.from({ length: 101 }, (_, n) => (
              <line key={n} x1={pos(n)} x2={pos(n)} y1="0" y2={n % 5 ? 12 : 25} stroke="#6f6f6f" />
            ))}
            {Array.from({ length: 21 }, (_, i) => (
              <text key={i} x={pos(i * 5)} y="22" textAnchor="middle" className={i ? "fill-[#c0c0c0] text-[12px]" : "fill-[#e0dc50] text-[12px]"}>{i * 5}</text>
            ))}
          </svg>
        </div>
        <span className="w-[50px] shrink-0" />
      </div>
    </>
  );
}

/* ---------- command panel ---------- */

function Rollout({ title, children }: Kids & { title: string }) {
  return (
    <section className="relative mt-[5px] w-[166px]">
      <div className="absolute inset-x-0 top-2 bottom-0 border border-black" />
      <h2 className="relative mx-[3px] flex h-4 items-center border border-[#6a6a6a] bg-[#444] text-[12px] text-[#e0e0e0]">
        <button aria-label={"折叠 " + title} className="w-3 text-center leading-3">-</button>
        <span className="flex-1 pr-3 text-center">{title}</span>
      </h2>
      <div className="relative">{children}</div>
    </section>
  );
}

const TABS: ReactNode[] = [
  <><path d="M10 1l1.500 5 5-3-3 5 5.500 2-5.500 2 3 5-5-3-1.500 5-1.500-5-5 3 3-5L1 10l5.500-2-3-5 5 3z" fill="#e07020" /><circle cx="10" cy="10" r="3.500" fill="#fff2a0" /></>,
  <><path d="M3 18C3 8 9 3 18 2v6c-6 1-9 4-9 10z" fill="#2f8fe0" stroke="#bfe0ff" /><path d="M1 1v18h18" stroke="#ccc" strokeDasharray="2 2" /></>,
  <><path d="M5 0h10v9H5z" fill="url(#steel)" /><path d="M10 9v6M3 15l7-5 7 5" stroke="#ddd" /><path d="M0 14h5v5H0zM8 14h5v5H8zM15 14h5v5h-5z" fill="#dfe2e6" /></>,
  <><circle cx="12" cy="10" r="7.500" fill="#b9bfc8" stroke="#eee" /><circle cx="12" cy="10" r="4" stroke="#555" fill="#eee" /><circle cx="12" cy="10" r="1.500" fill="#555" /><path d="M4 4c-3 4-3 8 0 12M1 5c-2 3-2 7 0 10" stroke="#999" /></>,
  <><path d="M0 1h20v14H0z" fill="#f0f2f4" /><path d="M7 5l2-2h5v6l-2 2H7zM7 5h5v6M12 5l2-2" stroke="#222" /><path d="M6 17h8v2H6z" fill="#c8ccd2" /></>,
  <><path d="M2 19L12 7" stroke="#b05a48" strokeWidth="3" /><path d="M7 2l4-1 8 7-2 3-4-3-3-2z" fill="#cfd3d8" stroke="#555" strokeWidth=".6" /></>,
];
const TAB_NAMES = ["创建", "修改", "层次", "运动", "显示", "实用程序"];
const CATS: [string, ReactNode][] = [["图形", <Shapes />], ["灯光", <Lamp />], ["摄影机", <Cam />], ["辅助对象", <Tape />], ["空间扭曲", <path d="M1 3c3-3 4 2 8 0s4 2 8-1M1 8c3-3 4 2 8 0s4 2 8-1M1 13c3-3 4 2 8 0s4 2 8-1" stroke="#b5b9be" strokeWidth="1.200" />], ["系统", <><circle cx="6" cy="5" r="3.500" fill="#ddd" stroke="#ddd" strokeDasharray="1.500 1.500" strokeWidth="2.500" /><circle cx="13" cy="11" r="3" fill="#999" stroke="#999" strokeDasharray="1.500 1.500" strokeWidth="2.500" /></>]];

function CommandPanel() {
  return (
    <aside className="flex w-[184px] shrink-0 flex-col border-b border-black bg-[#444] text-[12px]">
      <div className="mr-[6px] mb-1 flex flex-1 flex-col border-r border-b border-[#383838] pt-[3px] pl-[2px]">
        <div className="flex">
          {TABS.map((t, i) => (
            <button key={i} aria-label={TAB_NAMES[i]} className={i === 0 ? "flex h-[25px] w-[29px] items-center justify-center rounded-t border border-b-0 border-black" : "flex h-[25px] w-[29px] items-center justify-center rounded-t border border-l-0 border-black bg-[#3c3c3c]"}><Svg s={20}>{t}</Svg></button>
          ))}
        </div>
        <div className="mt-2 ml-[10px] flex items-center gap-[3px]">
          <button aria-label="几何体" className="-mr-[1px] flex h-[21px] w-[22px] shrink-0 items-center justify-center border border-black bg-[#3c7fdd]"><Svg s={18} h={16}><Sphere /></Svg></button>
          {CATS.map(([n, c]) => (<button key={n} aria-label={n} className="w-[21px] shrink-0 pl-[2px]"><Svg s={18} h={16}>{c}</Svg></button>))}
        </div>
        <Drop label="类别" value="标准基本体" box="mt-[7px] ml-[9px] h-[21px] w-[163px] border-2 border-r-0 border-b-0 border-black bg-gradient-to-b from-white to-[#cfcfcf]" />
        <div className="mt-[7px] ml-[2px] flex flex-col border-t border-black pl-1">
          <Rollout title="对象类型">
            <label className="flex h-[20px] items-center justify-center gap-2 pr-7 text-[#1a1a1a]">
              <input type="checkbox" className="h-3 w-3 appearance-none border-2 border-r-[#555] border-b-[#555] border-t-black border-l-black" />自动栅格
            </label>
            <div className="grid grid-cols-2 gap-x-1 gap-y-[3px] px-[2px] pb-1 text-[#c8c8c8]">
              {["长方体", "圆锥体", "球体", "几何球体", "圆柱体", "管状体", "圆环", "四棱锥", "茶壶", "平面"].map((n) => (
                <button key={n} className="h-[18px] border border-t-[#555] border-r-black border-b-black border-l-[#555] leading-4">{n}</button>
              ))}
            </div>
          </Rollout>
          <div className="h-[2px]" />
          <Rollout title="名称和颜色">
            <div className="flex items-center gap-[5px] px-2 pt-[7px] pb-2">
              <input aria-label="对象名称" readOnly value="选择了 13 个 对象" className="h-5 w-[131px] border-t-2 border-r border-b border-l-2 border-t-black border-r-[#5a5a5a] border-b-[#5a5a5a] border-l-black bg-[#555] pl-[2px] text-[#1a1a1a]" />
              <button aria-label="对象颜色" className="h-5 w-[17px] border border-black bg-white" />
            </div>
          </Rollout>
        </div>
      </div>
    </aside>
  );
}

/* ---------- status area ---------- */

function Coord({ n }: { n: string }) {
  return (
    <label className="ml-3 flex items-center gap-px">{n}:
      <input className="h-[20px] w-[59px] border-t-2 border-r border-b border-l-2 border-t-black border-r-[#333] border-b-[#333] border-l-black bg-[#555]" />
    </label>
  );
}

const sunken = "flex items-center border-t border-r border-b border-l border-t-black border-l-black border-r-[#333] border-b-[#333]";
const NavB = ({ label, w = "w-6", children }: Kids & { label: string; w?: string }) => (
  <button aria-label={label} className={"flex h-[22px] shrink-0 items-center justify-center " + w}>{children}</button>
);
const VBar = () => <span className="h-4 w-px shrink-0 bg-black" />;

function StatusBar() {
  return (
    <footer className="flex h-[50px] shrink-0 bg-[#444] pt-[2px] text-[12px] text-[#c8c8c8]">
      <div className="flex w-[100px] shrink-0 flex-col border border-white">
        <div className="h-[23px] border border-[#777] bg-[#dcc3c3]" />
        <input aria-label="MAXScript 侦听器" readOnly value="欢迎使用 MAXScript" className="h-[22px] w-full border-2 border-[#666] bg-white pl-[2px] text-black [font-family:'Liberation_Mono','Noto_Sans_CJK_SC',monospace]" />
      </div>
      <div className="ml-[7px] flex flex-1 flex-col gap-1 pt-[2px]">
        <div className="flex h-[21px] items-center">
          <div className={"h-full flex-1 pl-[5px] " + sunken}>选择了 13 个 对象</div>
          <span className="flex w-[27px] justify-center"><Svg s={18}><path d="M9 1c5 0 5 6 2 9H7C4 7 4 1 9 1z" fill="#e9868c" stroke="#a33" strokeWidth=".6" /><path d="M8 10h2v7H8z" fill="#eee" /></Svg></span>
          <button aria-label="选择锁定" className="flex w-[27px] justify-center"><Svg s={14}><path d="M4 6V3.500c0-3 6-3 6 0V6" stroke="#eee" strokeWidth="1.500" /><path d="M2 6h10v7H2z" fill="#ecd9bd" /><path d="M7 8v3" stroke="#444" /></Svg></button>
          <button aria-label="绝对模式" className="flex w-[27px] justify-center"><Svg s={14}><path d="M0 0h14v14H0z" fill="#e6e8ec" /><circle cx="7" cy="7" r="3.500" stroke="#222" /><path d="M7 0v4M7 10v4M0 7h4M10 7h4" stroke="#222" /></Svg></button>
          <div className="-ml-[10px] flex"><Coord n="X" /><Coord n="Y" /><Coord n="Z" /></div>
        </div>
        <div className="flex h-[21px] items-center">
          <div className={"h-full flex-1 pl-[5px] " + sunken}>渲染</div>
          <button aria-label="自适应降级" className="-mt-px -mr-3 flex h-[21px] w-6 items-center justify-center border border-black bg-[#3c7fdd]"><Svg s={16}><path d="M2 5h9v9H2zM2 5l3-3h9v9l-3 3M11 5l3-3" stroke="#fff" fill="#8aa" fillOpacity=".5" strokeWidth="1.500" /></Svg></button>
        </div>
      </div>
      <div className="ml-[13px] flex w-[100px] shrink-0 flex-col gap-1 pt-[2px] [font-family:'Liberation_Sans','Noto_Sans_CJK_SC',sans-serif]">
        <div className={"h-[21px] pl-[5px] whitespace-nowrap " + sunken}>栅格 = 1000.0mm</div>
        <button className={"h-[21px] pl-[5px] whitespace-nowrap " + sunken}>添加时间标记</button>
      </div>
      <button aria-label="设置关键点" className="mt-px ml-[3px] flex h-11 w-[42px] shrink-0 items-center justify-center border border-black"><Svg s={26} h={14}><circle cx="5" cy="7" r="3.500" stroke="#000" strokeWidth="2" /><path d="M8 7h16M20 7v5M23 7v5" stroke="#000" strokeWidth="2.500" /></Svg></button>
      <div className="mt-px ml-[3px] flex w-[67px] shrink-0 flex-col gap-[2px]">
        <button className="h-[21px] border border-black leading-4 whitespace-nowrap">自动关键点</button>
        <button className="h-[21px] border border-black leading-4 whitespace-nowrap">设置关键点</button>
      </div>
      <div className="mt-px ml-1 flex w-[112px] shrink-0 flex-col gap-1">
        <Drop label="选定对象" value="选定对象" box="h-5 w-full border-t-2 border-l-2 border-black bg-gradient-to-b from-white to-[#cfcfcf]" />
        <div className="flex items-center">
          <button aria-label="默认切线" className="flex w-[25px] shrink-0 items-end"><Svg s={20}><path d="M3 13c2 8 4 4 6-2S14 0 17 7" stroke="#d8796c" strokeWidth="1.500" /><path d="M2 13h3M10 3h7M4 17h6" stroke="#55c" /></Svg><Fly /></button>
          <button className="h-5 flex-1 border border-black leading-4 whitespace-nowrap">关键点过滤器...</button>
        </div>
      </div>
      <div className="ml-[10px] flex w-[222px] shrink-0 flex-col">
        <div className="flex h-[23px] items-center">
          <NavB label="转至开头"><Svg s={18}><path d="M1 3v12M9 3L3 9l6 6zM17 3l-6 6 6 6z" stroke="#ddd" fill="#777" /></Svg></NavB><VBar />
          <NavB label="上一帧"><Svg s={18}><path d="M8 3L1 9l7 6zM10 3h2v12h-2zM14 3h2v12h-2z" stroke="#ddd" fill="#777" /></Svg></NavB>
          <NavB label="播放"><Svg s={18}><path d="M4 3l9 6-9 6z" stroke="#ddd" fill="#888" /><path d="M18 13v5h-5z" fill="#fff" /></Svg></NavB>
          <NavB label="下一帧"><Svg s={18}><path d="M10 3l7 6-7 6zM2 3h2v12H2zM6 3h2v12H6z" stroke="#ddd" fill="#777" /></Svg></NavB><VBar />
          <NavB label="转至结尾"><Svg s={18}><path d="M17 3v12M9 3l6 6-6 6zM1 3l6 6-6 6z" stroke="#ddd" fill="#777" /></Svg></NavB>
          <NavB label="缩放" w="w-[26px]"><Svg s={18}><circle cx="7" cy="7" r="5" fill="url(#ball)" /><path d="M10 11l4 5" stroke="#9a9fa6" strokeWidth="3" /><path d="M13 3h5M15.500 0v6M13 8h5" stroke="#fff" /></Svg></NavB>
          <NavB label="缩放所有视图"><Svg s={18}><path d="M1 1h7v7H1zM10 1h7v7h-7zM1 10h7v7H1zM10 10h7v7h-7z" fill="#e3e6ea" /><circle cx="11" cy="11" r="3" fill="#89a" stroke="#333" /></Svg></NavB>
          <NavB label="最大化显示"><Svg s={18}><path d="M5 1H1v4M13 1h4v4M1 13v4h4" stroke="#eee" /><path d="M5 5h8v8H5z" fill="#6ea868" stroke="#a8d4a2" /><path d="M18 13v5h-5z" fill="#fff" /></Svg></NavB>
          <NavB label="所有视图最大化"><Svg s={18}><path d="M1 9h8v8H1z" fill="#6ea868" /><path d="M6 1h5v6H6zM12 1h5v6h-5zM11 9h5v7h-5z" fill="#dfe3e8" stroke="#555" strokeWidth=".5" /><path d="M18 13v5h-5z" fill="#fff" /></Svg></NavB>
        </div>
        <div className="flex h-[23px] items-center">
          <NavB label="关键点模式"><Svg s={18} h={16}><path d="M1 3v10M17 3v10M7 5L3 8l4 3zM11 5l4 3-4 3zM9 5v6" stroke="#ddd" /></Svg></NavB><VBar />
          <input aria-label="当前帧" defaultValue="0" className="ml-px h-5 w-[63px] border-t-2 border-r border-b border-l-2 border-t-black border-r-[#333] border-b-[#333] border-l-black bg-[#555] pl-1" />
          <span className="flex w-3 flex-col items-center gap-[3px] text-[#bbb]"><Svg s={7} h={4}><path d="M0 4h7L3.500 0z" fill="#bbb" /></Svg><Tri c="#bbb" /></span><VBar />
          <NavB label="时间配置" w="w-5"><Svg s={18}><path d="M1 1h10v15H1z" fill="#e8ecf2" /><path d="M3 3h6v4H3z" fill="#2b6fc0" /><circle cx="13" cy="12" r="4.500" fill="#eee" stroke="#333" /><path d="M13 9v3h3" stroke="#222" /></Svg></NavB>
          <NavB label="视野"><Svg s={18}><path d="M2 2l13 7-13 7M7 5c3 2 3 6 0 8" stroke="#bbb" strokeWidth="1.500" /><path d="M18 13v5h-5z" fill="#fff" /></Svg></NavB>
          <NavB label="平移"><Svg s={18}><path d="M4 11L1 8l2-1 2 2V3l2-1 1 5V1h2v6l1-5 2 1v6l2-2v4l-3 6H7z" fill="#e8e8e8" stroke="#555" strokeWidth=".5" /><path d="M18 13v5h-5z" fill="#fff" /></Svg></NavB>
          <NavB label="环绕"><Svg s={18}><circle cx="9" cy="9" r="4" fill="#8cbf86" /><path d="M9 0l3 4H6zM1 12c2 5 9 6 13 3" stroke="#ddd" fill="none" /><path d="M18 13v5h-5z" fill="#fff" /></Svg></NavB>
          <NavB label="最大化视口切换"><Svg s={18}><path d="M1 1h12v12H1z" fill="#e8eaee" /><path d="M10 10L4 4M4 8V4h4" stroke="#222" strokeWidth="1.500" /><path d="M17 8v9H8" stroke="#aaa" strokeDasharray="2 1" /></Svg></NavB>
        </div>
      </div>
    </footer>
  );
}

/* ---------- taskbar ---------- */

function TaskButton({ icon, text, bright }: { icon: ReactNode; text: string; bright?: boolean }) {
  return (
    <button
      className={
        bright
          ? "flex h-[38px] w-[158px] items-center gap-1 rounded-sm border border-[#dfe5ec] bg-gradient-to-b from-[#b3bcc6] via-[#76879a] to-[#8c9aaa] pl-[7px] text-[12px] text-white"
          : "flex h-[38px] w-[158px] items-center gap-1 rounded-sm border border-[#8796a8] bg-[linear-gradient(120deg,#8793a3_0%,#4b5869_25%,#28374c_50%,#2f4668_100%)] pl-[7px] text-[12px] text-white"
      }
    >
      {icon}<span className="whitespace-nowrap">{text}</span>
    </button>
  );
}

const TRAY: [string, ReactNode][] = [
  ["输入法", <><path d="M1 1h16v16H1z" fill="#f47216" /><text x="9" y="14" textAnchor="middle" className="fill-white text-[13px] font-bold">英</text></>],
  ["显卡", <><path d="M1 16h8L11 3z" fill="#e01010" /><path d="M11 3l6 13h-4l-3-5z" fill="#20c020" /></>],
  ["助手", <><circle cx="9" cy="5" r="4" fill="#d9b08c" /><path d="M3 17c0-9 12-9 13 0z" fill="#3a9a94" /><path d="M6 4h6M4 10l5 2" stroke="#ddd" strokeWidth="1.500" /></>],
  ["监视器", <><path d="M3 2h12v14H3z" fill="#032e0a" stroke="#bbb" /><path d="M5 4v11M8 4v11M11 4v11" stroke="#1d9a35" strokeDasharray="1 1" strokeWidth="1.500" /></>],
  ["微信", <><ellipse cx="7" cy="7" rx="6.500" ry="5.500" fill="#7ccb4a" /><ellipse cx="12" cy="12" rx="5.500" ry="4.500" fill="#f2f2f2" /></>],
  ["安全", <><path d="M9 1l8 3c0 7-3 11-8 13C4 15 1 11 1 4z" fill="#e9f5e4" /><path d="M9 3l6 2c0 5-2 8-6 10-4-2-6-5-6-10z" fill="#4cae2c" /><path d="M10 5l-4 5h3l-1 4 4-5H9z" fill="#fff" /></>],
  ["360", <><circle cx="9" cy="9" r="8" fill="#e9d61c" /><path d="M9 1a8 8 0 0 1 0 16c5-6 3-12 0-16z" fill="#4fb52a" /><path d="M9 5v8M5 9h8" stroke="#fff" strokeWidth="3" /></>],
  ["QQ", <><ellipse cx="9" cy="5" rx="5" ry="5" fill="#111" /><ellipse cx="9" cy="12" rx="6.500" ry="6" fill="#111" /><ellipse cx="9" cy="12" rx="4.500" ry="5" fill="#fff" /><path d="M3 9h12v3H3z" fill="#e01818" /><circle cx="7" cy="4" r="1.200" fill="#fff" /><circle cx="11" cy="4" r="1.200" fill="#fff" /><path d="M3 17h12" stroke="#f5a315" strokeWidth="2" /></>],
  ["语音", <><path d="M2 2c7-2 12 4 10 9l4 5H6c1-4-4-6-4-14z" fill="#222" stroke="#ddd" /></>],
  ["音量", <><path d="M1 6h4l4-4v14l-4-4H1z" fill="#f0f0f0" /><path d="M11 6c2 2 2 4 0 6M13 3c4 4 4 8 0 12" stroke="#f0f0f0" strokeWidth="1.300" /></>],
  ["网络", <><path d="M6 5h11v9H6zM9 17h6" stroke="#f0f0f0" strokeWidth="1.500" /><path d="M1 1v5h4V1M3 6v10h3" stroke="#f0f0f0" strokeWidth="1.300" /></>],
];

function Taskbar() {
  return (
    <div className="flex h-10 shrink-0 items-center border-t border-[#7489a0] bg-[linear-gradient(90deg,#12355c_0%,#20466e_20%,#1a2f4b_42%,#173454_60%,#143056_100%)] text-[12px] text-white">
      <button aria-label="开始" className="ml-[7px]"><Svg s={40}><circle cx="20" cy="20" r="18" fill="#2c6ea8" stroke="#9fc2dd" strokeWidth="1.500" /><ellipse cx="20" cy="10" rx="14" ry="8" fill="#b9d4e8" fillOpacity=".6" /><ellipse cx="20" cy="33" rx="11" ry="5" fill="#35d6f5" fillOpacity=".6" /><path d="M11 13c3-2 5-2 8-1l-1 7c-3-1-5-1-8 1z" fill="#f0612a" /><path d="M21 12c3 1 5 1 8-1l-1 8c-3 1-5 1-8 0z" fill="#8ac53c" /><path d="M10 21c3-2 5-2 8-1l-1 7c-3-1-5-1-8 1z" fill="#3aa0e8" /><path d="M20 21c3 1 5 1 8-1l-1 8c-3 1-5 1-8 0z" fill="#fbc83a" /></Svg></button>
      <button aria-label="加速器" className="ml-6"><Svg s={34}><circle cx="17" cy="17" r="15" fill="#1a1a1a" /><circle cx="17" cy="17" r="10" fill="#cdd1d4" /><circle cx="17" cy="17" r="3" fill="#555" /><path d="M4 12C6 4 14 1 21 3l-2 5c-4-1-7 0-9 3l3 2-10 3z" fill="#e02b20" /><path d="M30 22c-2 7-9 10-16 9l2-5c4 1 7 0 9-3l-3-2 9-3z" fill="#2a7de0" /></Svg></button>
      <button aria-label="播放器" className="ml-[29px]"><Svg s={34}><circle cx="17" cy="17" r="14.500" stroke="#e02020" strokeWidth="2.500" fill="#3a0a0a" /><path d="M3 17C4 9 9 4 16 3c-5 4-6 9-5 14s3 9 8 12C10 31 4 25 3 17z" fill="#111" /><path d="M12 9l14 8-14 8z" fill="#f02a2a" /></Svg></button>
      <button aria-label="记事本" className="ml-[28px]"><Svg s={34}><path d="M10 3h19l1 26-8-3-18 2z" fill="#7fbdc6" /><path d="M10 3h17l-6 24H3z" fill="#b4dde2" /><path d="M27 5l4 23-8-2z" fill="#eee" /><path d="M10 3h18" stroke="#888" strokeWidth="2" strokeDasharray="1 1" /></Svg></button>
      <button aria-label="计算器" className="ml-[28px]"><Svg s={34}><path d="M6 2h22v30H6z" fill="#9cc8e8" stroke="#e3f1fa" strokeWidth="1.500" /><path d="M8 6h18v8H8z" fill="#e8f4fb" stroke="#5d8fb5" /><path d="M8 3h18v2H8z" fill="#f0a03a" /><path d="M9 18h12M9 22h12M9 26h12M9 30h12" stroke="#fff" strokeWidth="2.500" strokeDasharray="2.500 1" /><path d="M23 17h3M23 22h3" stroke="#6f9cc0" strokeWidth="2" /><path d="M23 25h3v6h-3z" fill="#f0a03a" /></Svg></button>
      <span className="ml-[17px] flex items-center gap-1">
        <TaskButton text="文件_115个人 - ..." icon={<Svg s={32}><rect x="1" y="1" width="30" height="30" rx="4" fill="#1c9df0" /><text x="16" y="24" textAnchor="middle" className="fill-white text-[22px] font-bold">5</text></Svg>} />
        <TaskButton text="百度一下，你就..." icon={<Svg s={32}><g strokeWidth="9"><path d="M16 5.500A10.500 10.500 0 0 1 26 13" stroke="#b44ce0" /><path d="M26 13a10.500 10.500 0 0 1-3 11" stroke="#f0502c" /><path d="M23 24a10.500 10.500 0 0 1-11 2" stroke="#f5d020" /><path d="M12 26a10.500 10.500 0 0 1-6-10" stroke="#4cc83c" /><path d="M6 16A10.500 10.500 0 0 1 16 5.500" stroke="#3aa0f0" /></g><circle cx="16" cy="16" r="3" fill="#fff" /></Svg>} />
      </span>
      <button aria-label="资源管理器" className="ml-4"><Svg s={34}><path d="M1 5h12l2 3h17v20H1z" fill="#f2d675" stroke="#c9a23a" /><path d="M4 3h8v4H4zM14 5h8v3h-8z" fill="#fff" stroke="#999" strokeWidth=".5" /><path d="M5 4h3v2H5z" fill="#2a2" /><path d="M3 11h28v14H3z" fill="#f9e9a4" /><path d="M5 33V22c0-3 3-4 5-4h15c3 0 5 2 5 4v11h-5v-8H10v8z" fill="#8ecdf0" stroke="#3f90c4" strokeWidth=".8" /></Svg></button>
      <span className="ml-4 flex items-center gap-1">
        <TaskButton text="UltraEdit-32 - [C..." icon={<Svg s={34}><circle cx="17" cy="17" r="15.500" fill="#d8a520" stroke="#111" strokeWidth="2" /><circle cx="13" cy="11" r="8" fill="#f2dc84" fillOpacity=".6" /><text x="5" y="22" className="fill-black text-[18px] font-bold italic">U</text><text x="16" y="27" className="fill-black text-[18px] font-bold italic">E</text></Svg>} />
        <TaskButton bright text="02书架02.max - ..." icon={<Svg s={34}><path d="M1 1h32v32H1z" fill="#dfe9ea" /><g transform="translate(5 1) scale(.85)"><path d="M8 1h11l4 5-6 4-8-2z" fill="#2cc4c0" /><path d="M17 10l6-4 4 9-4 8-7-4 3-5z" fill="#0a8d90" /><path d="M9 8l8 2 2 4-3 5-7-1 5-4z" fill="#14a9a8" /><path d="M9 18l7 1 7 4-4 6H8l-3-5z" fill="#0fa3a3" /></g><text x="16" y="32" className="fill-[#333] text-[7px] font-bold">MAX</text></Svg>} />
      </span>
      <div className="ml-auto flex h-full items-center">
        <button aria-label="搜狗输入法" className="w-[22px]"><Svg s={18}><path d="M2 2l15-1v14l-14 3z" fill="#f2541b" /><path d="M13 5c-4-2-7 0-6 2s6 1 6 4-5 3-8 1" stroke="#fff" strokeWidth="2.200" /></Svg></button>
        <button aria-label="帮助" className="w-[22px]"><Svg s={18}><circle cx="9" cy="9" r="7.500" fill="#1634b8" stroke="#cfd6ee" strokeWidth="1.500" /><path d="M6.500 7c0-4 5-3 5-.500 0 2-2.500 2-2.500 4M9 12v2" stroke="#fff" strokeWidth="1.800" /></Svg></button>
        <button aria-label="语言栏选项" className="flex w-5 flex-col items-center gap-2"><Svg s={9} h={7}><path d="M3 .500h5v4H6M.500 2.500h5v4h-5z" stroke="#fff" /></Svg><Tri c="#fff" w={5} /></button>
        <div className="ml-[11px] flex w-[56px] flex-col items-center leading-[17px] whitespace-nowrap"><span>71℃</span><span>CPU温度</span></div>
        <div className="ml-[13px] flex">
          {TRAY.map(([n, i]) => <button key={n} aria-label={n} className={n === "QQ" ? "flex h-9 w-6 items-center justify-center border-x border-[#4f6c8e] bg-[radial-gradient(circle_at_50%_100%,#cfe2f5_0%,transparent_40%)]" : "flex h-9 w-6 items-center justify-center"}><Svg s={18}>{i}</Svg></button>)}
        </div>
        <div className="ml-2 flex w-[64px] flex-col items-center leading-[18px]"><span>11:20</span><span>2019/10/3</span></div>
        <button aria-label="显示桌面" className="mr-px ml-2 h-[38px] w-[13px] border border-[#6c87a3] bg-gradient-to-b from-[#5b7896] to-[#1d3a5c]" />
      </div>
    </div>
  );
}

export default function App() {
  return (
    <div className="relative flex h-screen flex-col overflow-hidden bg-[#444] [font-family:'Noto_Sans','Noto_Sans_CJK_SC',sans-serif]">
      <Defs />
      <header className="relative z-30 flex flex-col">
        <TitleBar />
        <MenuBar />
        <button aria-label="应用程序菜单" className="absolute top-0 left-0 flex h-[41px] w-[41px] flex-col items-center border border-black bg-gradient-to-b from-[#ececec] to-[#8a8a8a]">
          <span className="mr-2 pt-[2px]"><MaxLogo s={28} /></span>
          <span className="-mt-px text-[8px] leading-[9px] font-bold text-black">MAX</span>
          <span className="absolute top-[17px] right-[2px]"><Tri c="#222" w={6} /></span>
        </button>
        <MainToolbar />
      </header>
      <Ribbon />
      <main className="flex min-h-0 flex-1">
        <SceneExplorer />
        <div className="ml-px flex min-w-0 flex-1 flex-col pt-[2px]">
          <div className="grid flex-1 grid-cols-[698fr_699fr] grid-rows-[401fr_412fr] gap-[5px]">
            <Viewport name={["+", "顶", "线框"]} ox={334} oy={127}><TopDrawing /></Viewport>
            <Viewport name={["+", "前", "线框"]} ox={1037} oy={127}><FrontDrawing /></Viewport>
            <Viewport name={["+", "左", "线框"]} ox={334} oy={533}><LeftDrawing /></Viewport>
            <Viewport name={["+", "透视", "真实"]} ox={1039} oy={535} active><PerspectiveDrawing /></Viewport>
          </div>
          <Timeline />
        </div>
        <CommandPanel />
      </main>
      <StatusBar />
      <Taskbar />
      <div className="absolute top-[802px] -right-[26px] z-20 flex h-[46px] w-[46px] items-center rounded-full border-2 border-[#e8f6e8] bg-[#2fb344] pl-[2px] text-[12px] font-bold text-white">18</div>
      <span className="pointer-events-none absolute top-[62px] left-[763px] z-50">
        <Svg s={13} h={20}><path d="M.500 .500v16l4-3.500 2.500 6 3-1.500-2.500-5.500h5z" fill="#fff" stroke="#223" /></Svg>
      </span>
    </div>
  );
}
